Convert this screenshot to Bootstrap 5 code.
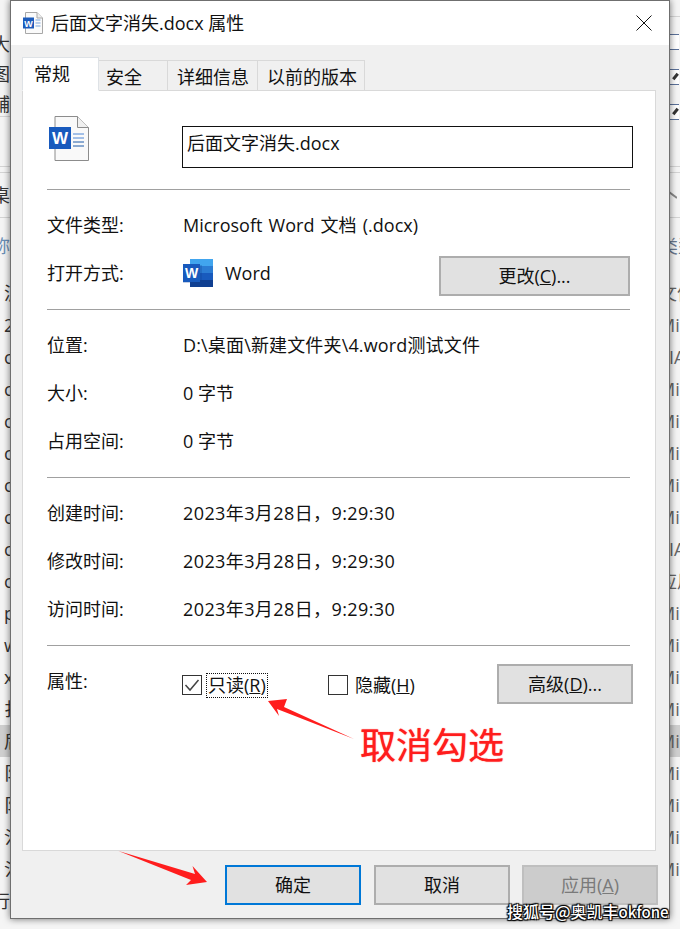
<!DOCTYPE html>
<html lang="zh">
<head>
<meta charset="utf-8">
<title>属性</title>
<link href="https://cdn.jsdelivr.net/npm/bootstrap@5.3.0/dist/css/bootstrap.min.css" rel="stylesheet">
<style>
html,body{width:680px;height:929px;overflow:hidden;margin:0;background:#f4f4f4}
body{font-family:"Open Sans","Noto Sans CJK SC",sans-serif;font-size:18px;color:#111;position:relative}
.backdrop{position:absolute;inset:0;background:#f5f5f5;color:#333;overflow:hidden}
.strip{position:absolute;top:0;bottom:0;overflow:hidden;line-height:32px;white-space:nowrap}
.strip-l{left:0;width:10px}
.strip-r{left:669px;width:11px;color:#666}
.strip-row{height:32px;padding-left:4px}
.strip-row.sel{background:#cfcfcf}
.strip-r .strip-row{padding-left:0;text-indent:-10px}
.strip-r .strip-row.strip-ia{text-indent:0}
.strip-sep{border-bottom:1px solid #d4d4d4}
.strip-head{height:30px;line-height:30px;margin-left:-8px}
.strip-r .strip-head{margin-left:-9px;color:#6a7a90}
.tick-box{width:10px;height:16px;border:1px solid #5b7199;border-right:0;margin:0 0 19px 0;background:#fff;position:relative}
.tick-box.on::after{content:"";position:absolute;left:2px;top:5px;width:7px;height:3px;background:#333;transform:rotate(-50deg)}
.dlg{position:absolute;left:10px;top:0;width:660px;height:919px;background:#f0f0f0;border:1px solid #6f6f6f;box-shadow:0 0 7px rgba(0,0,0,.55)}
.dlg-title{height:44px;background:#fff;padding-left:12px;padding-right:17px}
.dlg-title span{margin-left:8px;line-height:1}
.dlg-body{flex:1 1 auto;min-height:0;padding:0 0 0 11px}
.tabs-win{height:46px;border:0;padding-top:12px;margin-bottom:0;flex-wrap:nowrap;position:relative;z-index:1}
.tabs-win .nav-link{height:31px;margin-top:3px;padding:0 0 0 9px;border:1px solid #d9d9d9;border-radius:0;border-left-width:0;background:#f0f0f0;color:#111;font-size:18px;line-height:33px;text-align:left}
.tabs-win .nav-link.active{height:34px;margin-top:0;border-left-width:1px;border-bottom-color:#fff;background:#fff;color:#111;line-height:32px;margin-bottom:-1px;padding-left:11px}
.tab-a{width:77px}.tabs-win .tab-b{width:69px;padding-left:7px}.tab-c{width:90px}.tab-d{width:107px}
.panel-win{width:634px;flex:1 1 auto;background:#fff;border:1px solid #d9d9d9;padding:0 24px;margin-top:-1px}
.name-sec{height:98px;padding-top:25px}
.big-ico{width:135px;flex:none;padding-left:2px}
.name-box{width:451px;flex:none;height:42px;border:1px solid #111;border-radius:0;padding:0 3px 10px 4px;font-size:18px;line-height:30px;color:#111;background:#fff;margin-top:10px;box-shadow:none}
.name-box:focus{border-color:#111;box-shadow:none}
.rule{margin:0;border:0;border-top:1px solid #a0a0a0;opacity:1;width:583px}
.sec{padding:11px 0 12px}
.fld{height:48px}
.fld-k{width:136px;flex:none}
.val-type{word-spacing:1.500px}
.val-path{letter-spacing:.15px}
.val-date{letter-spacing:.4px}
.word-ico{margin-right:12px;flex:none}
.btn-win{height:40px;border:2px solid #adadad;border-radius:0;background:#e1e1e1;color:#111;font-size:18px;line-height:1;padding:0;box-shadow:none}
.btn-win:hover{background:#e1e1e1;border-color:#adadad}
.btn-change{width:191px;margin-left:auto;margin-right:1px;margin-top:6px}
.btn-adv{width:136px;margin-left:auto;margin-right:-2px;margin-top:6px;flex:none}
.btn-foot{width:136px}
.btn-ok{border-color:#0078d7;margin-right:1px}
.btn-ok:hover{border-color:#0078d7}
.btn-off,.btn-off:disabled{background:#ccc;border-color:#bfbfbf;color:#7a7a7a;opacity:1}
.attr-row{height:48px;align-items:center}
.chk{width:20px;height:20px;border:1px solid #333;background:#fff;flex:none;display:flex;align-items:center;justify-content:center}
.chk-lab{margin-left:4px;padding:0 1px;line-height:23px;border:1px dotted transparent}
.chk-lab.focus{border-color:#111}
.ro{margin-left:-1px;width:146px;margin-top:8px}
.hid{width:150px;margin-top:8px}
.hid .chk-lab{margin-left:5px}
.dlg-foot{height:67px;padding:14px 11px 0 0;gap:12px;justify-content:flex-end}
.overlay{position:absolute;left:0;top:0;pointer-events:none}
.note{position:absolute;left:360px;top:717px;color:#ff1d1d;font-size:36px;line-height:52px;font-weight:400;text-shadow:0 0 1px #ff1d1d;font-family:"Noto Sans CJK SC",sans-serif;white-space:nowrap}
.wm{position:absolute;left:507px;top:900px;color:#fff;font-size:16px;line-height:22px;font-weight:500;white-space:nowrap;text-shadow:0 0 2px #000,1px 1px 1px #000,-1px -1px 1px #000,1px -1px 1px #000,-1px 1px 1px #000;font-family:"Noto Sans CJK SC",sans-serif}
.wm-latin{font-size:15px}
</style>
</head>
<body>
<div class="backdrop">
  <div class="strip strip-l">
    <div style="height:29px"></div>
    <div class="strip-head">大</div>
    <div class="strip-head">图</div>
    <div class="strip-head strip-sep" style="height:28px">辅</div>
    <div style="height:50px" class="strip-sep"></div>
    <div style="height:6px" class="strip-sep"></div>
    <div class="strip-head strip-sep" style="height:45px;line-height:44px">桌</div>
    <div class="strip-head" style="color:#6a8fb5;height:59px;line-height:56px">称</div>
    <div class="strip-row">泸</div>
    <div class="strip-row">2</div>
    <div class="strip-row">c</div><div class="strip-row">c</div><div class="strip-row">c</div><div class="strip-row">c</div><div class="strip-row">c</div><div class="strip-row">c</div><div class="strip-row">c</div><div class="strip-row">c</div>
    <div class="strip-row">p</div><div class="strip-row">w</div><div class="strip-row">x</div><div class="strip-row">扌</div>
    <div class="strip-row sel">后</div>
    <div class="strip-row">阝</div><div class="strip-row">阝</div><div class="strip-row">氵</div><div class="strip-row">氵</div>
    <div class="strip-row" style="padding-left:0;margin-left:-8px">行</div>
  </div>
  <div class="strip strip-r">
    <div style="height:17px" class="strip-sep"></div>
    <div style="height:17px"></div>
    <div class="tick-box"></div>
    <div class="tick-box on"></div>
    <div class="tick-box on"></div>
    <div style="height:28px" class="strip-sep"></div>
    <div style="height:6px" class="strip-sep"></div>
    <div style="height:45px" class="strip-sep d-flex align-items-center"><svg width="8" height="12" viewBox="0 0 8 12"><path d="M0 3l8 6" stroke="#888" stroke-width="2" fill="none"/></svg></div>
    <div class="strip-head" style="height:59px;line-height:56px">类型</div>
    <div class="strip-row">文件</div>
    <div class="strip-row">Mi</div><div class="strip-row strip-ia">IA</div><div class="strip-row">Mi</div><div class="strip-row">Mi</div><div class="strip-row">Mi</div><div class="strip-row">Mi</div><div class="strip-row">Mi</div><div class="strip-row strip-ia">IA</div><div class="strip-row">应用</div>
    <div class="strip-row">Mi</div><div class="strip-row">Mi</div><div class="strip-row">Mi</div><div class="strip-row">Mi</div>
    <div class="strip-row sel">Mi</div>
    <div class="strip-row">Mi</div><div class="strip-row">Mi</div><div class="strip-row">Mi</div><div class="strip-row">Mi</div>
  </div>
</div>

<div class="dlg d-flex flex-column">
  <div class="dlg-title d-flex align-items-center">
    <svg width="20" height="22" viewBox="0 0 20 22"><path d="M2.5 .5H14l5.5 5.500V21.500H2.500z" fill="#fafafa" stroke="#a8a8a8"/><path d="M14 .5V6h5.500" fill="#eee" stroke="#a8a8a8"/><rect x="0" y="5.500" width="11" height="11" fill="#1d5cbc"/><text x="5.500" y="14.500" text-anchor="middle" fill="#fff" font-size="9" font-weight="700" font-family="Liberation Sans">W</text><path d="M12.500 8h5M12.500 11h5M12.500 14h5" stroke="#7aa5dc"/></svg>
    <span>后面文字消失.docx 属性</span>
    <svg class="ms-auto" width="16" height="16" viewBox="0 0 16 16"><path d="M.5.500l15 15M15.500.500l-15 15" stroke="#111" fill="none"/></svg>
  </div>
  <div class="dlg-body d-flex flex-column">
    <ul class="nav nav-tabs tabs-win">
      <li class="nav-item"><a class="nav-link active tab-a" href="#">常规</a></li>
      <li class="nav-item"><a class="nav-link tab-b" href="#">安全</a></li>
      <li class="nav-item"><a class="nav-link tab-c" href="#">详细信息</a></li>
      <li class="nav-item"><a class="nav-link tab-d" href="#">以前的版本</a></li>
    </ul>
    <div class="panel-win">
      <div class="name-sec d-flex">
        <div class="big-ico">
          <svg width="40" height="45" viewBox="0 0 40 45"><path d="M6 .5H28.500L39.500 11.500V44.500H6z" fill="#f9f9f9" stroke="#8c8c8c"/><path d="M28.500 .5V11.500H39.500" fill="#f0f0f0" stroke="#8c8c8c"/><rect x="0" y="11" width="22" height="22" fill="#185abd"/><text x="11" y="28" text-anchor="middle" fill="#fff" font-size="17" font-weight="700" font-family="Liberation Sans">W</text><path d="M24 18h11M24 22h11" stroke="#4d86d6"/><path d="M24 26h11M24 30h11" stroke="#1d5aa8"/></svg>
        </div>
        <input class="form-control name-box" value="后面文字消失.docx" aria-label="文件名">
      </div>
      <hr class="rule">
      <div class="sec">
        <div class="fld d-flex align-items-center"><div class="fld-k">文件类型:</div><div class="val-type">Microsoft Word 文档 (.docx)</div></div>
        <div class="fld d-flex align-items-center"><div class="fld-k">打开方式:</div>
          <svg class="word-ico" width="30" height="28" viewBox="0 0 30 28"><rect x="7" y="0" width="23" height="7" fill="#41a5ee"/><rect x="7" y="7" width="23" height="7" fill="#2b7cd3"/><rect x="7" y="14" width="23" height="7" fill="#185abd"/><rect x="7" y="21" width="23" height="7" fill="#103f91"/><rect x="0" y="6" width="19" height="18" fill="#103f91" opacity=".25"/><rect x="0" y="5" width="17" height="18" fill="#185abd"/><text x="8.500" y="19" text-anchor="middle" fill="#fff" font-size="14" font-weight="700" font-family="Liberation Sans">W</text></svg>
          <div>Word</div>
          <button class="btn btn-win btn-change" type="button">更改(<u>C</u>)...</button>
        </div>
      </div>
      <hr class="rule">
      <div class="sec">
        <div class="fld d-flex align-items-center"><div class="fld-k">位置:</div><div class="val-path">D:\桌面\新建文件夹\4.word测试文件</div></div>
        <div class="fld d-flex align-items-center"><div class="fld-k">大小:</div><div>0 字节</div></div>
        <div class="fld d-flex align-items-center"><div class="fld-k">占用空间:</div><div>0 字节</div></div>
      </div>
      <hr class="rule">
      <div class="sec">
        <div class="fld d-flex align-items-center"><div class="fld-k">创建时间:</div><div class="val-date">2023年3月28日，9:29:30</div></div>
        <div class="fld d-flex align-items-center"><div class="fld-k">修改时间:</div><div class="val-date">2023年3月28日，9:29:30</div></div>
        <div class="fld d-flex align-items-center"><div class="fld-k">访问时间:</div><div class="val-date">2023年3月28日，9:29:30</div></div>
      </div>
      <hr class="rule">
      <div class="d-flex attr-row" style="margin-top:11px">
        <div class="fld-k align-self-start" style="line-height:48px">属性:</div>
        <div class="d-flex align-items-center ro"><span class="chk"><svg width="16" height="14" viewBox="0 0 16 14"><path d="M1.500 7l4.500 5L14.500 2" stroke="#444" stroke-width="1.500" fill="none"/></svg></span><span class="chk-lab focus">只读(<u>R</u>)</span></div>
        <div class="d-flex align-items-center hid"><span class="chk"></span><span class="chk-lab">隐藏(<u>H</u>)</span></div>
        <button class="btn btn-win btn-adv" type="button">高级(<u>D</u>)...</button>
      </div>
    </div>
    <div class="dlg-foot d-flex">
      <button class="btn btn-win btn-foot btn-ok" type="button">确定</button>
      <button class="btn btn-win btn-foot" type="button">取消</button>
      <button class="btn btn-win btn-foot btn-off" type="button" disabled>应用(<u>A</u>)</button>
    </div>
  </div>
</div>

<svg class="overlay" width="680" height="929" viewBox="0 0 680 929">
  <polygon points="268,701 287,699 284,707 354,739 277,709 279,716" fill="#ff1d1d"/>
  <polygon points="118.500,851 195,874 192.500,866 207,882 186,885 191,880" fill="#ff1d1d"/>
</svg>
<div class="note">取消勾选</div>
<div class="wm">搜狐号@奥凯丰<span class="wm-latin">okfone</span></div>
</body>
</html>
